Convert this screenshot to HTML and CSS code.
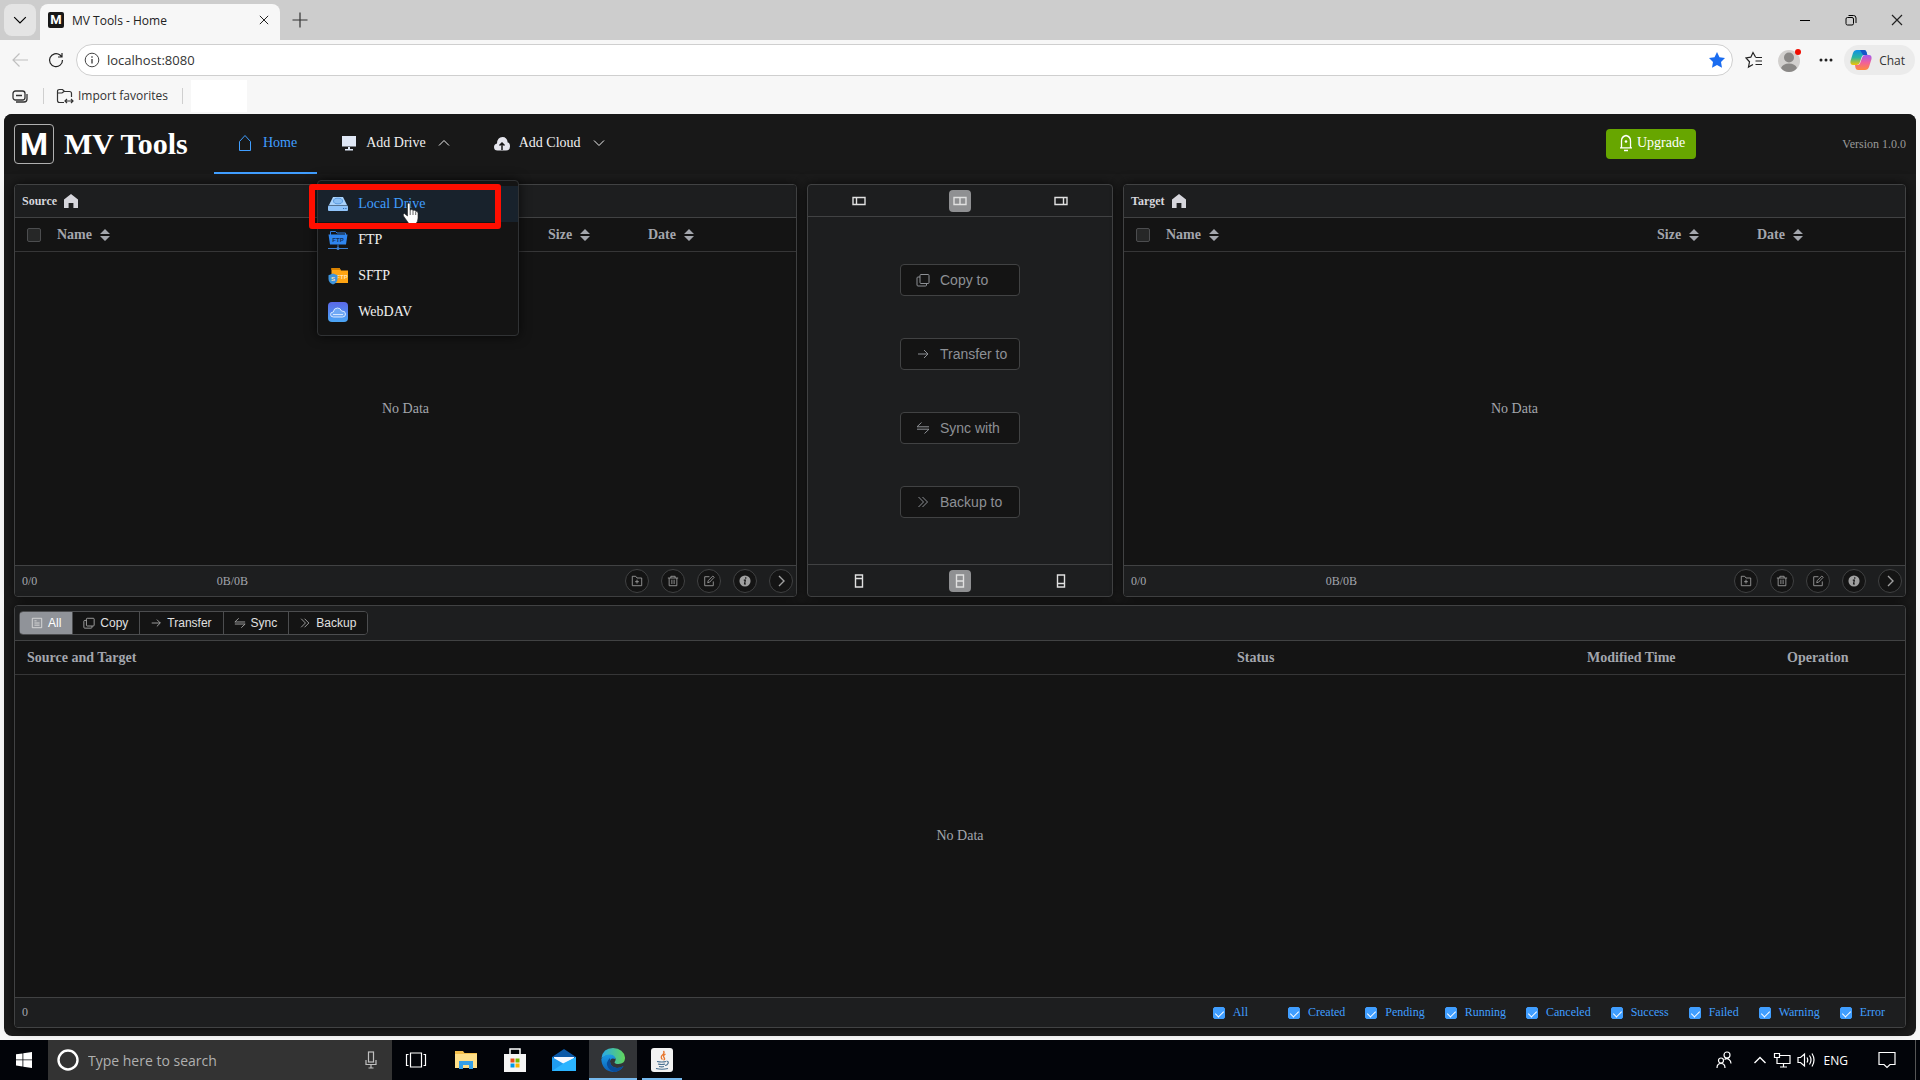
FILE: index.html
```
<!DOCTYPE html>
<html lang="en">
<head>
    <meta charset="UTF-8">
    <meta name="viewport" content="width=device-width, initial-scale=1.0">
    <title>MV Tools - Home</title>
    <link rel="stylesheet" href="styles.css">
</head>
<body>
    <!-- shared icons -->
    <svg class="sprite" width="0" height="0" aria-hidden="true">
        <symbol id="i-down" viewBox="0 0 12 12"><path d="M1 3.500l5 5 5-5" fill="none" stroke="currentColor"/></symbol>
        <symbol id="i-up" viewBox="0 0 12 12"><path d="M1 8.500l5-5 5 5" fill="none" stroke="currentColor"/></symbol>
        <symbol id="i-close" viewBox="0 0 12 12"><path d="M1 1l10 10M11 1L1 11" fill="none" stroke="currentColor" stroke-width="1.200"/></symbol>
        <symbol id="i-house" viewBox="0 0 14 14"><path d="M7 0L0 5.500V14h4.600V9h4.800v5H14V5.500z" fill="currentColor"/></symbol>
        <symbol id="i-sort" viewBox="0 0 10 14"><path d="M5 1l5 5H0zM5 13l5-5H0z" fill="currentColor"/></symbol>
        <symbol id="i-copy" viewBox="0 0 14 14"><path d="M5 1.500h7q1 0 1 1v7q0 1-1 1H5q-1 0-1-1v-7q0-1 1-1zM4 4H2q-1 0-1 1v7q0 1 1 1h7.500q1 0 1-1v-1.500" fill="none" stroke="currentColor"/></symbol>
        <symbol id="i-arrow" viewBox="0 0 14 14"><path d="M2 7h10M8 3l4 4-4 4" fill="none" stroke="currentColor"/></symbol>
        <symbol id="i-sync" viewBox="0 0 14 14"><path d="M5.500 1.500L1 5.800h12M1 8.200h12L8.500 12.500" fill="none" stroke="currentColor"/></symbol>
        <symbol id="i-double" viewBox="0 0 14 14"><path d="M2.500 2l5 5-5 5M6.500 2l5 5-5 5" fill="none" stroke="currentColor"/></symbol>
        <symbol id="i-list" viewBox="0 0 14 14"><path d="M1.500 1.500h11v11h-11zM4 4.500h2.500M4 7h6M4 9.500h6" fill="none" stroke="currentColor"/></symbol>
        <symbol id="i-folder-add" viewBox="0 0 14 14"><path d="M1.500 12.500v-11H5.500L7 3.500h5.500v9zM7 5.500v4.500M4.800 7.800h4.400" fill="none" stroke="currentColor"/></symbol>
        <symbol id="i-trash" viewBox="0 0 14 14"><path d="M1 3.500h12M4.500 3.500v-2h5v2M2.500 3.500v9h9v-9M5.700 5.500v5M8.300 5.500v5" fill="none" stroke="currentColor"/></symbol>
        <symbol id="i-edit" viewBox="0 0 14 14"><path d="M7.500 2H2v10.500h10V7.500M5.500 9l.6-2.500L11.500 1.200l1.500 1.500L7.800 8.300z" fill="none" stroke="currentColor"/></symbol>
        <symbol id="i-info" viewBox="0 0 14 14"><circle cx="7" cy="7" r="6.500" fill="currentColor"/><path d="M7.900 2.500v1.800M5.600 6h1.800l-.9 4.500h1.600" fill="none" stroke="#141414" stroke-width="1.400"/></symbol>
        <symbol id="i-right" viewBox="0 0 14 14"><path d="M5 2l5 5-5 5" fill="none" stroke="currentColor" stroke-width="1.400"/></symbol>
        <symbol id="i-col-left" viewBox="0 0 14 14"><path d="M1 3.500h12v7H1zM4.500 3.500v7" fill="none" stroke="currentColor" stroke-width="1.400"/></symbol>
        <symbol id="i-col-mid" viewBox="0 0 14 14"><path d="M1 3.500h12v7H1zM7 3.500v7" fill="none" stroke="currentColor" stroke-width="1.400"/></symbol>
        <symbol id="i-col-right" viewBox="0 0 14 14"><path d="M1 3.500h12v7H1zM9.500 3.500v7" fill="none" stroke="currentColor" stroke-width="1.400"/></symbol>
        <symbol id="i-row-top" viewBox="0 0 14 14"><path d="M3.500 1h7v12h-7zM3.500 4.500h7" fill="none" stroke="currentColor" stroke-width="1.400"/></symbol>
        <symbol id="i-row-mid" viewBox="0 0 14 14"><path d="M3.500 1h7v12h-7zM3.500 7h7" fill="none" stroke="currentColor" stroke-width="1.400"/></symbol>
        <symbol id="i-row-bottom" viewBox="0 0 14 14"><path d="M3.500 1h7v12h-7zM3.500 9.500h7" fill="none" stroke="currentColor" stroke-width="1.400"/></symbol>
    </svg>

    <!-- browser -->
    <div class="tab-bar">
        <button class="tab-list" aria-label="Tab list"><svg width="14" height="14"><use href="#i-down"/></svg></button>
        <div class="tab">
            <span class="favicon">M</span>
            <span class="tab-title">MV Tools - Home</span>
            <button class="plain" aria-label="Close tab"><svg width="10" height="10"><use href="#i-close"/></svg></button>
        </div>
        <button class="plain new-tab" aria-label="New tab"><svg width="16" height="16" viewBox="0 0 16 16"><path d="M8 .5v15M.5 8h15" stroke="#333" stroke-width="1.200"/></svg></button>
        <div class="window-buttons">
            <button class="plain" aria-label="Minimize"><svg width="12" height="12"><path d="M1 6.500h10" stroke="#000"/></svg></button>
            <button class="plain" aria-label="Restore"><svg width="12" height="12" fill="none" stroke="#000"><rect x="1" y="3.500" width="7.500" height="7.500" rx="1.500"/><path d="M3.500 1.500h5q2.500 0 2.500 2.500v5"/></svg></button>
            <button class="plain" aria-label="Close"><svg width="12" height="12"><use href="#i-close"/></svg></button>
        </div>
    </div>
    <div class="toolbar">
        <button class="plain tool back" aria-label="Back"><svg width="18" height="16" fill="none" stroke="currentColor" stroke-width="1.200"><path d="M17 8H2M8.500 1.500L2 8l6.500 6.500"/></svg></button>
        <button class="plain tool" aria-label="Reload"><svg width="16" height="16" fill="none" stroke="currentColor" stroke-width="1.200"><path d="M14.500 8A6.500 6.500 0 1 1 12 3l1.500 1.500M14 1v4h-4"/></svg></button>
        <div class="address">
            <svg width="16" height="16" fill="none" stroke="#444"><circle cx="8" cy="8" r="6.800"/><path d="M8 7v4.500M8 4.200v1.500" stroke-width="1.400"/></svg>
            <input type="text" value="localhost:8080" aria-label="Address">
            <svg width="18" height="18" viewBox="0 0 18 18"><path d="M9 1l2.500 5.200 5.500.8-4 4 1 5.700L9 14l-5 2.700L5 11 1 7l5.500-.8z" fill="#1a6cf0"/></svg>
        </div>
        <button class="plain tool" aria-label="Favorites"><svg width="18" height="18" fill="none" stroke="#222" stroke-width="1.200"><path d="M10.500 6L8 1.500 5.800 6.200 1 7l3.500 3.800-1 5.200L8 13.500M10.500 6.500H17M10.500 10H17M10.500 13.500H17" /></svg></button>
        <button class="plain tool" aria-label="Profile"><svg width="26" height="26"><circle cx="12" cy="14" r="11" fill="#d2d0ce"/><circle cx="12" cy="10.500" r="5" fill="#8a8886"/><path d="M4 21q2-4.500 8-4.500t8 4.500q-3 4-8 4t-8-4z" fill="#8a8886"/><circle cx="21" cy="5" r="3" fill="#f00c00"/></svg></button>
        <button class="plain tool" aria-label="More"><svg width="14" height="4" fill="#222"><circle cx="2" cy="2" r="1.500"/><circle cx="7" cy="2" r="1.500"/><circle cx="12" cy="2" r="1.500"/></svg></button>
        <button class="chat">
            <svg width="22" height="22" viewBox="0 0 22 22">
                <defs>
                    <linearGradient id="cp-a" x1="0" y1="0" x2="0" y2="1"><stop offset="0" stop-color="#0f8ee8"/><stop offset=".5" stop-color="#2bb5a0"/><stop offset="1" stop-color="#f5c400"/></linearGradient>
                    <linearGradient id="cp-b" x1="0" y1="0" x2="0" y2="1"><stop offset="0" stop-color="#a35cf0"/><stop offset=".5" stop-color="#f0609a"/><stop offset="1" stop-color="#ff8a3c"/></linearGradient>
                </defs>
                <path d="M7 1h7q2 0 2.500 2l.8 3h-3q-2 0-2.700 2L10 13q-.8 3-3 3H3q-3 0-2.500-4L3 4q1-3 4-3z" fill="url(#cp-a)"/>
                <path d="M15 21H8q-2 0-2.500-2l-.5-3h2.500q2 0 2.700-2L12 9q.8-3 3-3h4q3 0 2.500 4L19 18q-1 3-4 3z" fill="url(#cp-b)"/>
                <path d="M10 1h4q2 0 2.500 2l.8 3H13z" fill="#1556c8"/>
            </svg>
            Chat
        </button>
    </div>
    <div class="favorites">
        <svg width="16" height="14" fill="none" stroke="#333" stroke-width="1.300"><rect x="1" y="2" width="12" height="9" rx="2.500"/><path d="M4 6.500h6M4 13h8q3 0 3-3V5"/></svg>
        <span class="divider"></span>
        <button class="plain import"><svg width="18" height="16" fill="none" stroke="#333" stroke-width="1.200"><path d="M8 14.500H3.500q-2 0-2-2v-9q0-2 2-2h3l2 2h5q2 0 2 2V9M1.500 5H6l2-1.500M9 13h8M11 11l-2 2 2 2M15 11l2 2-2 2"/></svg>Import favorites</button>
        <span class="divider"></span>
        <span class="blank"></span>
    </div>

    <div class="app">
        <header class="header">
            <div class="brand">
                <span class="logo">M</span>
                <h1>MV Tools</h1>
            </div>
            <ul class="menu">
                <li>
                    <a class="menu-item active" href="#">
                        <svg width="24" height="18" fill="none" stroke="currentColor"><path d="M5.500 16.500v-9L11 1.500l5.500 6v9z"/></svg>
                        Home
                    </a>
                </li>
                <li>
                    <button class="menu-item">
                        <svg width="24" height="18"><path d="M5 2h14v10.500H5z" fill="#dfe7f5"/><path d="M11 13h2v2h-2zM8 15h8v1.500H8z" fill="#dfe7f5"/></svg>
                        Add Drive
                        <svg class="arrow" width="12" height="12"><use href="#i-up"/></svg>
                    </button>
                    <div class="dropdown">
                        <a class="dropdown-item hover" href="#">
                            <svg width="20" height="20"><path d="M5 3h10l4 8H1z" fill="#a9d2fb"/><ellipse cx="10" cy="7" rx="4.500" ry="2.800" fill="#8cc0f5" stroke="#5b9be0"/><rect y="11.500" width="20" height="5.500" rx="1" fill="#90c4fa"/><path d="M15 14.500h1.200M17.300 14.500h1.200" stroke="#2d6db5" stroke-width="1.200"/></svg>
                            Local Drive
                        </a>
                        <a class="dropdown-item" href="#">
                            <svg width="20" height="20"><path d="M2.500 5V1.500h5L9 3h8.500v2" fill="none" stroke="#2f7de0"/><path d="M.5 4.500h19l-1.500 10H2z" fill="#2f86f0"/><text x="10" y="12" class="ftp-label">FTP</text><path d="M10 14.500v4M0 18.500h20" stroke="#3b7fd0"/><circle cx="10" cy="18.500" r="1.500" fill="#3b7fd0"/></svg>
                            FTP
                        </a>
                        <a class="dropdown-item" href="#">
                            <svg width="20" height="20"><path d="M3.500 2h8l1.500 2.500h7V17H3.500z" fill="#ffa412"/><path d="M3.500 2h8l1 2h-9z" fill="#d98200"/><text x="14" y="13" class="sftp-label">FTP</text><path d="M5 7.500l4.500 1.700v3.800q0 3.500-4.500 5.500-4.500-2-4.500-5.500V9.200z" fill="#3d94dd"/><text x="5" y="15" class="sftp-label">S</text></svg>
                            SFTP
                        </a>
                        <a class="dropdown-item" href="#">
                            <svg width="20" height="20"><defs><linearGradient id="dav" x1="0" y1="0" x2="0" y2="1"><stop offset="0" stop-color="#5a68e8"/><stop offset="1" stop-color="#4ba6f5"/></linearGradient></defs><rect width="20" height="20" rx="4" fill="url(#dav)"/><path d="M5.500 15q-3 0-3-2.500t2.800-2.500q.5-4 4.200-4 3 0 4 3 4-.2 4 3 0 3-3 3z" fill="#6fa8f5" stroke="#d5e6ff"/><path d="M5 12.500h10" stroke="#d5e6ff"/></svg>
                            WebDAV
                        </a>
                        <svg class="pointer" width="18" height="24"><path d="M5.500 14V2.500q0-1.500 1.300-1.500T8 2.500V8q2-1 3 .5 2-.8 2.700.8 2.300-.3 2.300 2V16q0 4-3 6.500H7.500L1.500 14q-1-2 .8-2.500z" fill="#fff" stroke="#222" stroke-width=".6"/><path d="M8.200 8v5M11 9v4M13.700 10v3" stroke="#222" stroke-width=".7"/></svg>
                        <div class="highlight"></div>
                    </div>
                </li>
                <li>
                    <button class="menu-item">
                        <svg width="24" height="18"><path d="M7.500 16.500q-3.500 0-3.500-3.500 0-3 3-3.500.3-6.500 5.500-6.500 4.500 0 5.200 5.500 2.300.3 2.300 4 0 4-4 4z" fill="#e6e6ee"/><path d="M12 16V9M9.500 11.500L12 9l2.500 2.500" fill="none" stroke="#181818" stroke-width="1.500"/></svg>
                        Add Cloud
                        <svg class="arrow" width="12" height="12"><use href="#i-down"/></svg>
                    </button>
                </li>
            </ul>
            <button class="upgrade">
                <svg width="14" height="18" fill="none" stroke="currentColor" stroke-width="1.300"><path d="M2.500 13.500V7Q2.500 2.500 7 1.500q4.500 1 4.500 5.500v6.500M1 13.800h12M5 16.500h4"/><circle cx="7" cy="7.500" r="1.300" fill="currentColor" stroke="none"/></svg>
                Upgrade
            </button>
            <span class="version">Version 1.0.0</span>
        </header>

        <main class="main">
            <div class="explorer">
                <section class="panel">
                    <div class="panel-title">Source <svg width="14" height="14"><use href="#i-house"/></svg></div>
                    <table class="files">
                        <thead>
                            <tr>
                                <th class="col-check"><input type="checkbox" aria-label="Select all source files"></th>
                                <th>Name <svg width="10" height="14"><use href="#i-sort"/></svg></th>
                                <th class="col-size">Size <svg width="10" height="14"><use href="#i-sort"/></svg></th>
                                <th class="col-date">Date <svg width="10" height="14"><use href="#i-sort"/></svg></th>
                            </tr>
                        </thead>
                    </table>
                    <div class="empty">No Data</div>
                    <div class="panel-footer">
                        <span class="count">0/0</span>
                        <span class="bytes">0B/0B</span>
                        <button class="round" aria-label="New folder"><svg width="12" height="12"><use href="#i-folder-add"/></svg></button>
                        <button class="round" aria-label="Delete"><svg width="12" height="12"><use href="#i-trash"/></svg></button>
                        <button class="round" aria-label="Rename"><svg width="12" height="12"><use href="#i-edit"/></svg></button>
                        <button class="round" aria-label="Details"><svg width="12" height="12"><use href="#i-info"/></svg></button>
                        <button class="round" aria-label="Next"><svg width="14" height="14"><use href="#i-right"/></svg></button>
                    </div>
                </section>

                <section class="panel actions">
                    <div class="layout-bar">
                        <button class="layout" aria-label="Source only"><svg width="14" height="14"><use href="#i-col-left"/></svg></button>
                        <button class="layout selected" aria-label="Both"><svg width="14" height="14"><use href="#i-col-mid"/></svg></button>
                        <button class="layout" aria-label="Target only"><svg width="14" height="14"><use href="#i-col-right"/></svg></button>
                    </div>
                    <div class="action-list">
                        <button class="action"><svg width="14" height="14"><use href="#i-copy"/></svg>Copy to</button>
                        <button class="action"><svg width="14" height="14"><use href="#i-arrow"/></svg>Transfer to</button>
                        <button class="action"><svg width="14" height="14"><use href="#i-sync"/></svg>Sync with</button>
                        <button class="action"><svg width="14" height="14"><use href="#i-double"/></svg>Backup to</button>
                    </div>
                    <div class="layout-bar bottom">
                        <button class="layout" aria-label="Tasks large"><svg width="14" height="14"><use href="#i-row-top"/></svg></button>
                        <button class="layout selected" aria-label="Split"><svg width="14" height="14"><use href="#i-row-mid"/></svg></button>
                        <button class="layout" aria-label="Files large"><svg width="14" height="14"><use href="#i-row-bottom"/></svg></button>
                    </div>
                </section>

                <section class="panel">
                    <div class="panel-title">Target <svg width="14" height="14"><use href="#i-house"/></svg></div>
                    <table class="files">
                        <thead>
                            <tr>
                                <th class="col-check"><input type="checkbox" aria-label="Select all target files"></th>
                                <th>Name <svg width="10" height="14"><use href="#i-sort"/></svg></th>
                                <th class="col-size">Size <svg width="10" height="14"><use href="#i-sort"/></svg></th>
                                <th class="col-date">Date <svg width="10" height="14"><use href="#i-sort"/></svg></th>
                            </tr>
                        </thead>
                    </table>
                    <div class="empty">No Data</div>
                    <div class="panel-footer">
                        <span class="count">0/0</span>
                        <span class="bytes">0B/0B</span>
                        <button class="round" aria-label="New folder"><svg width="12" height="12"><use href="#i-folder-add"/></svg></button>
                        <button class="round" aria-label="Delete"><svg width="12" height="12"><use href="#i-trash"/></svg></button>
                        <button class="round" aria-label="Rename"><svg width="12" height="12"><use href="#i-edit"/></svg></button>
                        <button class="round" aria-label="Details"><svg width="12" height="12"><use href="#i-info"/></svg></button>
                        <button class="round" aria-label="Next"><svg width="14" height="14"><use href="#i-right"/></svg></button>
                    </div>
                </section>
            </div>

            <section class="panel tasks">
                <div class="task-bar">
                    <div class="button-group">
                        <button class="selected"><svg width="12" height="12"><use href="#i-list"/></svg>All</button>
                        <button><svg width="12" height="12"><use href="#i-copy"/></svg>Copy</button>
                        <button><svg width="12" height="12"><use href="#i-arrow"/></svg>Transfer</button>
                        <button><svg width="12" height="12"><use href="#i-sync"/></svg>Sync</button>
                        <button><svg width="12" height="12"><use href="#i-double"/></svg>Backup</button>
                    </div>
                </div>
                <table class="files">
                    <thead>
                        <tr>
                            <th>Source and Target</th>
                            <th class="col-status">Status</th>
                            <th class="col-time">Modified Time</th>
                            <th class="col-operation">Operation</th>
                        </tr>
                    </thead>
                </table>
                <div class="empty">No Data</div>
                <div class="panel-footer filters">
                    <span class="count">0</span>
                    <label class="filter-all"><input type="checkbox" checked>All</label>
                    <label><input type="checkbox" checked>Created</label>
                    <label><input type="checkbox" checked>Pending</label>
                    <label><input type="checkbox" checked>Running</label>
                    <label><input type="checkbox" checked>Canceled</label>
                    <label><input type="checkbox" checked>Success</label>
                    <label><input type="checkbox" checked>Failed</label>
                    <label><input type="checkbox" checked>Warning</label>
                    <label><input type="checkbox" checked>Error</label>
                </div>
            </section>
        </main>
    </div>

    <!-- taskbar -->
    <footer class="taskbar">
        <button class="task start" aria-label="Start"><svg width="16" height="16" fill="#fff"><path d="M0 2.300l6.500-.9v6.100H0zM7.300 1.300L16 0v7.500H7.300zM0 8.300h6.500v6.200L0 13.600zM7.300 8.300H16V16l-8.700-1.300z"/></svg></button>
        <div class="search">
            <svg width="24" height="24"><circle cx="12" cy="12" r="9.500" fill="none" stroke="#fff" stroke-width="2.400"/></svg>
            <input type="text" placeholder="Type here to search" aria-label="Search">
            <svg width="12" height="18" fill="none" stroke="#c0c0c0" stroke-width="1.200"><rect x="3.500" y="1" width="5" height="10"/><path d="M1 9v4.500h10V9M6 13.500V17M3.500 17h5"/></svg>
        </div>
        <button class="task" aria-label="Task view"><svg width="22" height="16" fill="none" stroke="#fff" stroke-width="1.200"><path d="M5.500 1h11v14h-11zM3.500 2.500h-2v11h2M18.500 2.500h2v11h-2"/></svg></button>
        <button class="task" aria-label="File Explorer"><svg width="24" height="20"><path d="M1 1h8l1.500 2H23v15H1z" fill="#f5c04c"/><path d="M1 4h22v14H1z" fill="#ffe08a"/><path d="M5 19v-8h14v8h-4v-4H9v4z" fill="#35a0e8"/></svg></button>
        <button class="task" aria-label="Store"><svg width="24" height="24"><path d="M7 7V1h10v6" fill="none" stroke="#fff" stroke-width="1.500"/><path d="M1 6h22v18H1z" fill="#f5f5f5"/><path d="M7.500 10.500h4v4h-4z" fill="#e84f1c"/><path d="M12.500 10.500h4v4h-4z" fill="#7cb800"/><path d="M7.500 15.500h4v4h-4z" fill="#0099e8"/><path d="M12.500 15.500h4v4h-4z" fill="#fbb400"/></svg></button>
        <button class="task" aria-label="Mail"><svg width="24" height="22"><path d="M0 8l12-8 12 8v14H0z" fill="#0a58a8"/><path d="M2 8h20v8H2z" fill="#f5f8ff"/><path d="M0 8l12 7 12-7v14H0z" fill="#1f9cf0"/><path d="M0 22l12-8 12-6v14z" fill="#2bb4ff"/></svg></button>
        <button class="task current" aria-label="Edge">
            <svg width="24" height="24" viewBox="0 0 24 24">
                <defs>
                    <linearGradient id="edge-a"><stop offset="0" stop-color="#28a8ea"/><stop offset="1" stop-color="#62d65a"/></linearGradient>
                    <linearGradient id="edge-b" x1="0" y1="0" x2="0" y2="1"><stop offset="0" stop-color="#1b9be4"/><stop offset="1" stop-color="#0b5fb8"/></linearGradient>
                </defs>
                <path d="M.5 10Q2 0 12 0q10.500.5 12 9.500.3 6-6.500 6.500-4 0-4-1.800Q15.500 12 14 9.500 9 4.500 .5 10z" fill="url(#edge-a)"/>
                <path d="M.3 11Q3 6.500 9 6.500q5 .3 5.500 4.500Q9.500 9 9 13.500q.3 5.500 7 6.500 3.500 0 6.500-2Q19 24 12 24 1 23 .3 11z" fill="url(#edge-b)"/>
                <path d="M9 10q-5 4.500-2 9.500 2 3.500 6 4.400 6-.4 9.500-5.900-3 2-6.500 2-6.700-1-7-6.500z" fill="#0a4c98"/>
            </svg>
        </button>
        <button class="task running" aria-label="Java">
            <svg width="24" height="24" fill="none"><rect x="1" width="22" height="24" rx="3" fill="#f2f2f2"/><path d="M13.500 3q1.500 2-1 4t0 4.500M15.500 6q-3 1.500-1.500 3.500t-.5 2.500" stroke="#e8762c" stroke-width="1.300"/><path d="M7 13.500q5 1 9 0M8 16q4 1 7 0M9 18.500q3 .8 5 0M16.500 13q2.500.5 1.500 2.500t-3 2M6 20.500q6 1.500 12 0" stroke="#4a7090" stroke-width="1.200"/></svg>
        </button>
        <div class="tray">
            <svg width="18" height="20" fill="none" stroke="#fff" stroke-width="1.200"><circle cx="12" cy="5" r="3"/><circle cx="6" cy="10.500" r="2.500"/><path d="M2 18q0-4.500 4-4.500t4 4.500M9.500 9.500Q12 7.500 14 9.500q2 1.500 2 4"/></svg>
            <svg class="tray-up" width="14" height="14"><path d="M1.500 10L7 4.500l5.500 5.500" fill="none" stroke="#fff" stroke-width="1.400"/></svg>
            <svg width="18" height="16" fill="none" stroke="#fff" stroke-width="1.200"><path d="M6 3.500h11v8H4V8M10.500 11.500V15M7 15h7M1.500 1.500h5v4h-5zM4 5.500V8"/></svg>
            <svg width="18" height="16" fill="none" stroke="#fff" stroke-width="1.200"><path d="M1 5.500h2.500L7.500 2v12l-4-3.500H1zM10 5.500q1.500 2.500 0 5M12.500 3.500q3 4.500 0 9M15 1.500q4 6.500 0 13"/></svg>
            <span class="language">ENG</span>
            <svg class="notice" width="18" height="18"><path d="M1 1.500h16v12h-5L9 16.500l-3-3H1z" fill="none" stroke="#fff" stroke-width="1.200"/></svg>
        </div>
    </footer>
</body>
</html>
```
FILE: styles.css
```
* {
    box-sizing: border-box;
}

body {
    display: flex;
    flex-direction: column;
    height: 100vh;
    margin: 0;
    background-color: #f7f7f7;
    font-family: "Liberation Serif", serif;
    font-size: 14px;
}

button {
    cursor: pointer;
}

svg {
    flex: none;
}

.sprite {
    position: absolute;
}

.plain {
    display: flex;
    align-items: center;
    justify-content: center;
    padding: 0;
    border: none;
    background: none;
    color: #222;
}

/* browser */
.tab-bar,
.toolbar,
.favorites {
    display: flex;
    align-items: center;
    font-family: "Open Sans", sans-serif;
    font-size: 12px;
    color: #222;
}

.tab-bar {
    height: 40px;
    padding-left: 4px;
    background-color: #cdcdcd;
}

.tab-list {
    display: flex;
    align-items: center;
    justify-content: center;
    width: 32px;
    height: 32px;
    padding: 0;
    border: none;
    border-radius: 8px;
    background-color: #e4e4e4;
}

.tab {
    display: flex;
    align-items: center;
    align-self: flex-end;
    gap: 8px;
    width: 240px;
    height: 36px;
    margin-left: 4px;
    padding: 0 11px 4px 8px;
    border-radius: 8px 8px 0 0;
    background-color: #f7f7f7;
}

.favicon {
    width: 16px;
    height: 16px;
    border-radius: 2px;
    background-color: #181818;
    color: #fff;
    font: bold 13px/16px Roboto, sans-serif;
    text-align: center;
}

.tab-title {
    flex: 1;
}

.new-tab {
    width: 40px;
    height: 40px;
}

.window-buttons {
    display: flex;
    margin-left: auto;
}

.window-buttons .plain {
    width: 46px;
    height: 40px;
}

.toolbar {
    height: 40px;
    padding: 0 5px 0 2px;
}

.tool {
    width: 36px;
    height: 32px;
}

.back {
    color: #c0c0c0;
}

.address {
    display: flex;
    flex: 1;
    align-items: center;
    gap: 7px;
    height: 32px;
    margin: 0 3px 0 2px;
    padding: 0 6px 0 7px;
    border: 1px solid #cfcfcf;
    border-radius: 16px;
    background-color: #fff;
}

.address input {
    flex: 1;
    padding: 0;
    border: none;
    outline: none;
    background: none;
    color: #333;
    font: 13px "Open Sans", sans-serif;
}

.chat {
    display: flex;
    align-items: center;
    gap: 7px;
    height: 30px;
    padding: 0 10px 0 6px;
    border: none;
    border-radius: 15px;
    background-color: #ebebeb;
    color: #333;
    font: 12px "Open Sans", sans-serif;
}

.favorites {
    height: 34px;
    padding: 0 0 3px 12px;
}

.divider {
    width: 1px;
    height: 16px;
    margin: 0 12px 0 15px;
    background-color: #cfcfcf;
}

.import {
    gap: 4px;
    color: #333;
    font: 12px "Open Sans", sans-serif;
}

.favorites .import + .divider {
    margin: 0 8px 0 14px;
}

.blank {
    width: 56px;
    height: 32px;
    background-color: #fff;
}

/* app */
.app {
    display: flex;
    flex: 1;
    flex-direction: column;
    min-height: 0;
    margin: 0 4px 4px;
    border-radius: 8px;
    background-color: #1b1b1b;
}

.header {
    display: flex;
    align-items: center;
    height: 60px;
    padding: 0 10px;
    border-radius: 8px 8px 0 0;
    background-color: #181818;
}

.brand {
    display: flex;
    align-items: center;
    gap: 10px;
    width: 200px;
}

.logo {
    width: 40px;
    height: 40px;
    border: 1px solid #b0b0b0;
    border-radius: 4px;
    color: #fff;
    font: bold 32px/38px Roboto, sans-serif;
    text-align: center;
}

.brand h1 {
    margin: 0;
    color: #fff;
    font-size: 30px;
}

.menu {
    display: flex;
    flex: 1;
    margin: 0;
    padding: 0;
    list-style: none;
}

.menu li {
    position: relative;
}

.menu-item {
    display: flex;
    align-items: center;
    gap: 5px;
    height: 60px;
    padding: 0 20px;
    border: none;
    border-bottom: 2px solid transparent;
    background: none;
    color: #f0f0f0;
    font: 14px "Liberation Serif", serif;
    text-decoration: none;
}

.menu-item.active {
    border-bottom-color: #409eff;
    color: #409eff;
}

.arrow {
    margin-left: 7px;
}

.dropdown {
    position: absolute;
    z-index: 1;
    top: 66px;
    left: 0;
    width: 202px;
    padding: 5px 0;
    border: 1px solid #303234;
    border-radius: 4px;
    background-color: #141414;
    box-shadow: 0 0 12px rgba(0, 0, 0, 0.7);
}

.dropdown-item {
    display: flex;
    align-items: center;
    gap: 10px;
    height: 36px;
    padding: 0 10px;
    color: #f0f0f0;
    text-decoration: none;
}

.dropdown-item.hover {
    background-color: #18222c;
    color: #409eff;
}

.ftp-label,
.sftp-label {
    fill: #12305c;
    font: bold 6px "Liberation Sans", sans-serif;
    text-anchor: middle;
}

.sftp-label {
    fill: #ffe2b0;
}

.pointer {
    position: absolute;
    top: 21px;
    left: 84px;
}

.highlight {
    position: absolute;
    top: 3px;
    left: -9px;
    width: 192px;
    height: 45px;
    border: 6px solid #ff0e00;
    border-radius: 3px;
    pointer-events: none;
}

.upgrade {
    display: flex;
    align-items: center;
    justify-content: center;
    gap: 4px;
    width: 90px;
    height: 30px;
    padding: 0 0 2px 2px;
    border: none;
    border-radius: 4px;
    background-color: #67a600;
    color: #fff;
    font: 14px "Liberation Serif", serif;
}

.version {
    width: 210px;
    color: #999;
    font-size: 12px;
    text-align: right;
}

.main {
    display: flex;
    flex: 1;
    flex-direction: column;
    gap: 8px;
    min-height: 0;
    padding: 10px 10px 8px;
}

.explorer {
    display: grid;
    grid-template-columns: 1fr 306px 1fr;
    gap: 10px;
    height: calc(50% - 9px);
}

.panel {
    display: flex;
    flex-direction: column;
    overflow: hidden;
    border: 1px solid #414243;
    border-radius: 4px;
    background-color: #141414;
    box-shadow: 0 0 12px rgba(0, 0, 0, 0.7);
}

.tasks {
    flex: 1;
}

.panel-title {
    display: flex;
    align-items: center;
    gap: 7px;
    height: 33px;
    padding: 0 7px;
    border-bottom: 1px solid #414243;
    background-color: #1d1e1f;
    color: #d6d6dc;
    font-size: 12px;
    font-weight: bold;
}

.files {
    width: 100%;
    table-layout: fixed;
    border-collapse: separate;
    border-spacing: 0;
}

.files th {
    height: 34px;
    padding: 0 12px;
    border-bottom: 1px solid #363637;
    color: #a3a6ad;
    text-align: left;
}

.files th svg {
    margin-left: 4px;
    vertical-align: middle;
}

.files th input {
    display: block;
}

.files .col-check {
    width: 30px;
    padding-right: 0;
}

.col-size {
    width: 100px;
}

.col-date {
    width: 160px;
}

.col-status {
    width: 350px;
}

.col-time {
    width: 200px;
}

.col-operation {
    width: 130px;
}

input[type="checkbox"] {
    position: relative;
    width: 14px;
    height: 14px;
    margin: 0;
    appearance: none;
    border: 1px solid #4c4d4f;
    border-radius: 2px;
    background-color: #262727;
}

.empty {
    display: flex;
    flex: 1;
    align-items: center;
    justify-content: center;
    color: #a3a6ad;
}

.panel-footer {
    display: flex;
    align-items: center;
    gap: 12px;
    height: 31px;
    padding: 0 3px 0 7px;
    border-top: 1px solid #414243;
    background-color: #1d1e1f;
    color: #a3a6ad;
    font-size: 12px;
}

.count {
    width: 25%;
    margin-right: -10px;
}

.bytes {
    flex: 1;
}

.round {
    display: flex;
    align-items: center;
    justify-content: center;
    width: 24px;
    height: 24px;
    padding: 0;
    border: 1px solid #414243;
    border-radius: 50%;
    background-color: #141414;
    color: #a0a0a0;
}

.actions {
    background-color: #1d1e1f;
}

.layout-bar {
    display: flex;
    align-items: center;
    justify-content: space-around;
    height: 32px;
    border-bottom: 1px solid #414243;
}

.layout-bar.bottom {
    border-top: 1px solid #414243;
    border-bottom: none;
}

.layout {
    display: flex;
    align-items: center;
    justify-content: center;
    width: 22px;
    height: 22px;
    padding: 0;
    border: none;
    border-radius: 4px;
    background: none;
    color: #e0e0e0;
}

.layout.selected {
    background-color: #8f9092;
}

.action-list {
    display: flex;
    flex: 1;
    flex-direction: column;
    align-items: center;
    justify-content: center;
    gap: 42px;
}

.action {
    display: flex;
    align-items: center;
    gap: 10px;
    width: 120px;
    height: 32px;
    padding: 0 0 0 15px;
    border: 1px solid #414243;
    border-radius: 4px;
    background-color: #141414;
    color: #8d9095;
    font: 14px "Liberation Sans", sans-serif;
    white-space: nowrap;
}

.task-bar {
    display: flex;
    align-items: center;
    height: 35px;
    padding: 0 4px;
    border-bottom: 1px solid #414243;
    background-color: #1d1e1f;
}

.button-group {
    display: flex;
    overflow: hidden;
    border: 1px solid #4c4d4f;
    border-radius: 4px;
}

.button-group button {
    display: flex;
    align-items: center;
    gap: 5px;
    height: 22px;
    padding: 0 11px 0 10px;
    border: none;
    border-left: 1px solid #4c4d4f;
    background-color: #141414;
    color: #e0e0e0;
    font: 12px "Liberation Sans", sans-serif;
}

.button-group svg {
    color: #b0b0b0;
}

.button-group .selected {
    border-left-color: #909399;
    background-color: #909399;
    color: #fff;
}

.button-group .selected svg {
    color: #e0e0e0;
}

.filters {
    gap: 20px;
    height: 30px;
    padding-right: 20px;
    color: #409eff;
}

.filters .count {
    flex: 1;
    margin: 0;
    color: #a3a6ad;
}

.filters label {
    display: flex;
    align-items: center;
    gap: 8px;
}

.filters .filter-all {
    margin-right: 20px;
}

.filters input[type="checkbox"] {
    width: 12px;
    height: 12px;
    border-color: #409eff;
    background-color: #409eff;
}

.filters input:checked::after {
    content: "";
    position: absolute;
    top: 1px;
    left: 3px;
    width: 4px;
    height: 7px;
    border: solid #fff;
    border-width: 0 1px 1px 0;
    transform: rotate(45deg);
}

/* taskbar */
.taskbar {
    display: flex;
    height: 40px;
    background-color: #020409;
}

.task {
    display: flex;
    align-items: center;
    justify-content: center;
    width: 48px;
    margin-left: 1px;
    padding: 0;
    border: none;
    background: none;
}

.task.start {
    margin-left: 0;
}

.search + .task {
    margin-right: 1px;
    margin-left: 0;
}

.task.current {
    padding-top: 2px;
    border-bottom: 2px solid #76b9ed;
    background-color: #323437;
}

.task.running {
    width: 40px;
    margin-left: 5px;
    padding-top: 2px;
    border-bottom: 2px solid #76b9ed;
}

.search {
    display: flex;
    align-items: center;
    gap: 8px;
    width: 344px;
    padding: 0 15px 0 8px;
    background-color: #333;
}

.search input {
    flex: 1;
    padding: 0;
    border: none;
    outline: none;
    background: none;
    font: 14px "Open Sans", sans-serif;
}

.search input::placeholder {
    color: #b0b0b0;
}

.tray {
    display: flex;
    align-items: center;
    gap: 6px;
    margin-right: 4px;
    margin-left: auto;
    padding-right: 19px;
    border-right: 1px solid #555;
    color: #fff;
    font: 12px "Open Sans", sans-serif;
}

.tray-up {
    margin-left: 14px;
}

.language {
    margin-left: 3px;
}

.notice {
    margin-left: 24px;
}
```
